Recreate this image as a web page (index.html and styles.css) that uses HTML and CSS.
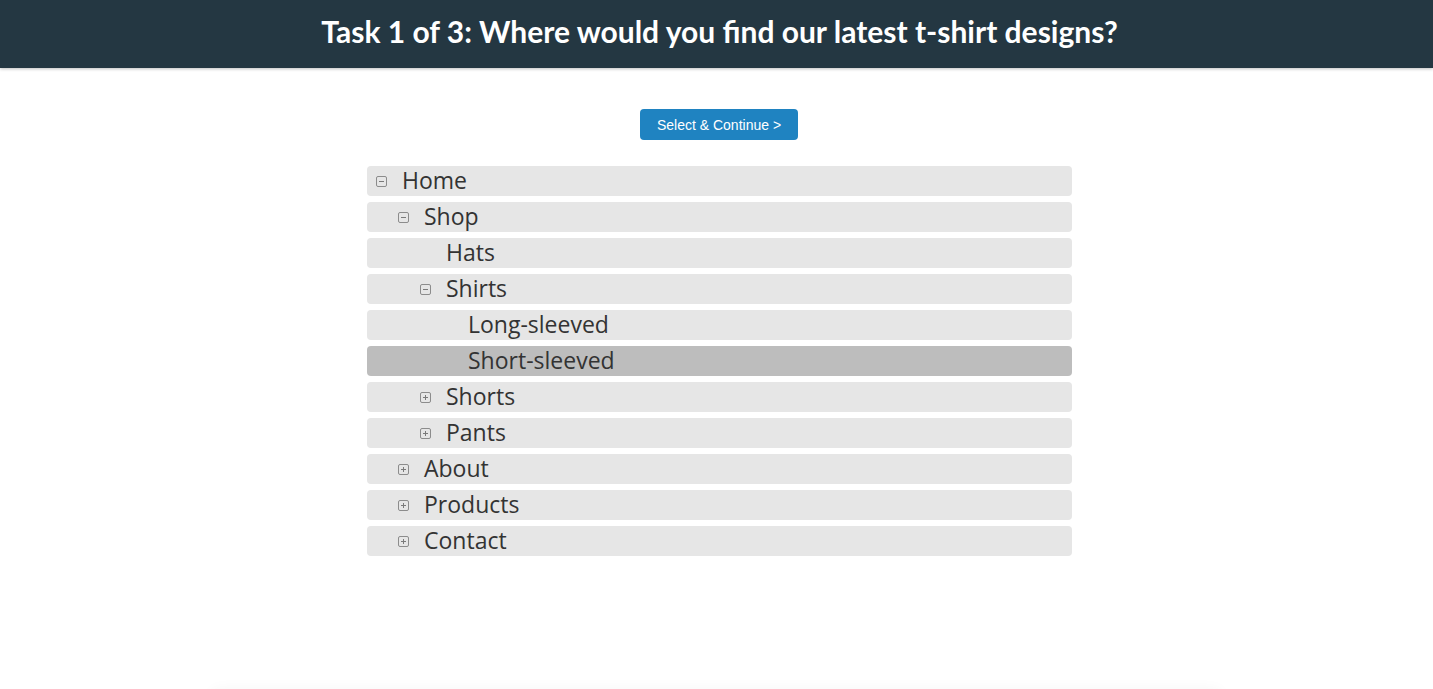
FILE: index.html
```html
<!DOCTYPE html>
<html>
<head>
<meta charset="utf-8">
<link rel="stylesheet" href="styles.css">
</head>
<body>
<header class="topbar">
  <h1 class="title">Task 1 of 3: Where would you find our latest t-shirt designs?</h1>
</header>
<main class="content">
  <button class="continue">Select &amp; Continue &gt;</button>
  <ul class="tree">
    <li class="node lvl0"><span class="toggle minus"></span><span class="label">Home</span></li>
    <li class="node lvl1"><span class="toggle minus"></span><span class="label">Shop</span></li>
    <li class="node lvl2"><span class="toggle none"></span><span class="label">Hats</span></li>
    <li class="node lvl2"><span class="toggle minus"></span><span class="label">Shirts</span></li>
    <li class="node lvl3"><span class="toggle none"></span><span class="label">Long-sleeved</span></li>
    <li class="node lvl3 selected"><span class="toggle none"></span><span class="label">Short-sleeved</span></li>
    <li class="node lvl2"><span class="toggle plus"></span><span class="label">Shorts</span></li>
    <li class="node lvl2"><span class="toggle plus"></span><span class="label">Pants</span></li>
    <li class="node lvl1"><span class="toggle plus"></span><span class="label">About</span></li>
    <li class="node lvl1"><span class="toggle plus"></span><span class="label">Products</span></li>
    <li class="node lvl1"><span class="toggle plus"></span><span class="label">Contact</span></li>
  </ul>
</main>
<div class="footer-shadow"></div>
</body>
</html>
```
FILE: styles.css
```css
html, body {
  margin: 0;
  padding: 0;
  background: #ffffff;
  height: 100%;
  overflow: hidden;
}
body {
  font-family: "Open Sans", "Liberation Sans", sans-serif;
  position: relative;
}
.topbar {
  height: 68px;
  background: #243742;
  box-shadow: 0 1px 3px rgba(0,0,0,0.25);
  display: flex;
  align-items: center;
  justify-content: center;
}
.title {
  margin: 0;
  color: #ffffff;
  font-family: Lato, "Liberation Sans", sans-serif;
  font-weight: 700;
  font-size: 30px;
  line-height: 1;
  padding-bottom: 6px;
  padding-left: 6px;
}
.content {
  display: flex;
  flex-direction: column;
  align-items: center;
  padding-top: 41px;
  padding-left: 5px;
}
.continue {
  width: 158px;
  height: 31px;
  border: none;
  border-radius: 4px;
  background: #1f83c1;
  color: #ffffff;
  font-family: "Liberation Sans", Arial, sans-serif;
  font-size: 14px;
  padding: 0;
  cursor: pointer;
}
.tree {
  list-style: none;
  margin: 26px 0 0 1px;
  padding: 0;
  width: 705px;
  display: flex;
  flex-direction: column;
  gap: 6px;
}
.node {
  height: 30px;
  background: #e6e6e6;
  border-radius: 4px;
  display: flex;
  align-items: center;
  color: #333333;
}
.node.selected {
  background: #bdbdbd;
}
.lvl0 { padding-left: 9px; }
.lvl1 { padding-left: 31px; }
.lvl2 { padding-left: 53px; }
.lvl3 { padding-left: 75px; }
.toggle {
  width: 11px;
  height: 11px;
  box-sizing: border-box;
  flex: none;
  margin-right: 15px;
  position: relative;
}
.toggle.minus, .toggle.plus {
  border: 1px solid #8c8c8c;
  border-radius: 2px;
}
.toggle.minus::before, .toggle.plus::before {
  content: "";
  position: absolute;
  left: 2px;
  top: 4px;
  width: 5px;
  height: 1px;
  background: #7a7a7a;
}
.toggle.plus::after {
  content: "";
  position: absolute;
  left: 4px;
  top: 2px;
  width: 1px;
  height: 5px;
  background: #7a7a7a;
}
.label {
  font-size: 23px;
  line-height: 30px;
  padding-bottom: 2px;
}
.footer-shadow {
  position: absolute;
  left: 210px;
  right: 210px;
  bottom: -20px;
  height: 20px;
  border-radius: 20px;
  box-shadow: 0 0 14px rgba(0,0,0,0.04);
}
```
